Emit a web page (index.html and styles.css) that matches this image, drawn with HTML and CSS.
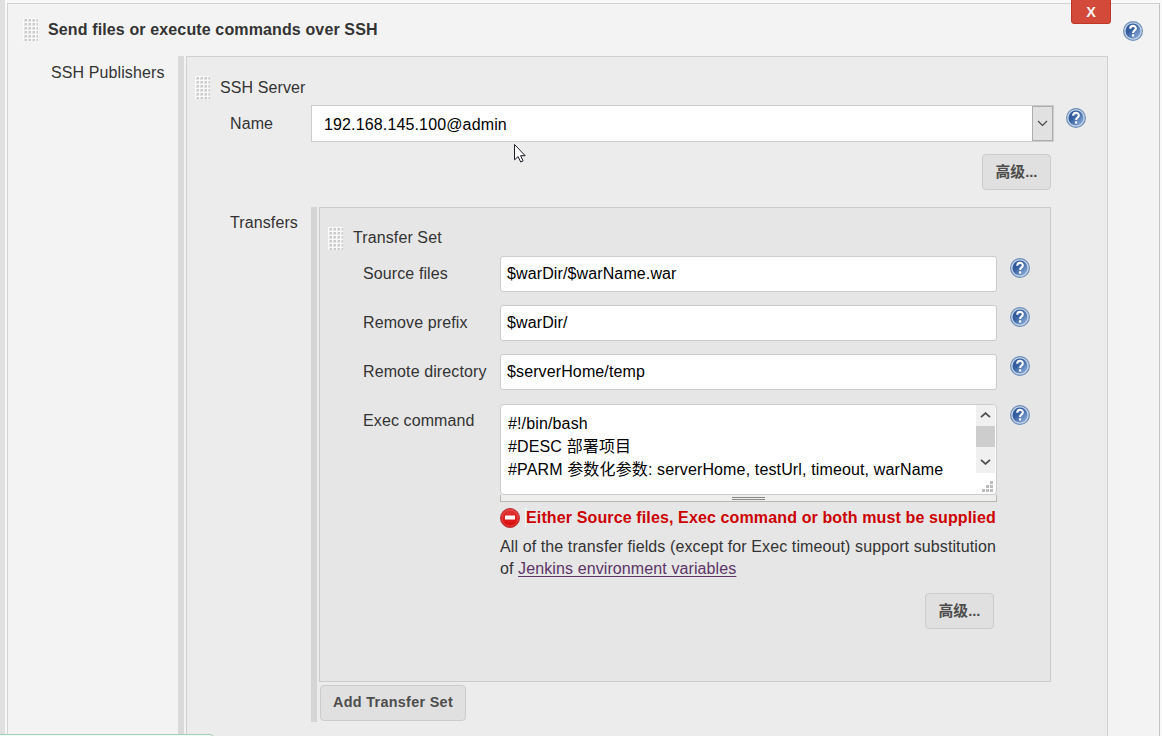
FILE: index.html
```html
<!DOCTYPE html>
<html lang="zh-CN">
<head>
<meta charset="utf-8">
<title>SSH Publishers</title>
<link rel="stylesheet" href="styles.css">
</head>
<body>
<svg width="0" height="0" class="defs">
  <defs>
    <linearGradient id="blue" x1="0" y1="0" x2="1" y2="1">
      <stop offset="0" stop-color="#285293"/><stop offset=".4" stop-color="#3660a0"/><stop offset="1" stop-color="#9dbce4"/>
    </linearGradient>
    <linearGradient id="red" x1="0" y1="0" x2="0" y2="1">
      <stop offset="0" stop-color="#e23a3a"/><stop offset="1" stop-color="#d90606"/>
    </linearGradient>
    <pattern id="dots" width="4" height="4" patternUnits="userSpaceOnUse">
      <rect width="4" height="4" fill="#fafafa"/><rect x="1" y="1" width="3" height="3" fill="#e2e2e2"/><rect x="2" y="1" width="2" height="2" fill="#cbcbcb"/>
    </pattern>
    <symbol id="grip" viewBox="0 0 15 23"><rect width="15" height="23" fill="url(#dots)"/></symbol>
    <symbol id="help" viewBox="0 0 20 20">
      <circle cx="10" cy="10" r="9.4" fill="#c3d3e8" stroke="#6f8fb8" stroke-width="1.2"/>
      <circle cx="10" cy="10" r="7.5" fill="url(#blue)"/>
      <path d="M7.2 7.8C7.2 4 13 4 12.8 7.5c0 2-2.7 2.1-2.7 4.4" fill="none" stroke="#fff" stroke-width="2.1"/>
      <rect x="9" y="13.3" width="2.2" height="2.2" fill="#fff"/>
    </symbol>
  </defs>
</svg>
<div class="page">
  <section class="panel">
    <button class="delete">X</button>
    <header class="panel-head">
      <svg class="grip"><use href="#grip"/></svg>
      <b class="title">Send files or execute commands over SSH</b>
      <svg class="help"><use href="#help"/></svg>
    </header>
    <div class="panel-body">
      <div class="side-label">SSH Publishers</div>
      <div class="bar"></div>
      <div class="server">
        <div class="server-head"><svg class="grip"><use href="#grip"/></svg><span>SSH Server</span></div>
        <div class="name-row">
          <label>Name</label>
          <div class="select"><span>192.168.145.100@admin</span>
            <div class="select-arrow"><svg width="11" height="7" viewBox="0 0 11 7"><path d="M1 1l4.5 4.5L10 1" fill="none" stroke="#444" stroke-width="1.1"/></svg></div>
          </div>
          <svg class="help"><use href="#help"/></svg>
        </div>
        <div class="advanced"><button class="btn small">高级...</button></div>
        <div class="transfers">
          <label>Transfers</label>
          <div class="transfer-list">
            <div class="set">
              <div class="set-head"><svg class="grip"><use href="#grip"/></svg><span>Transfer Set</span></div>
              <div class="field"><label>Source files</label><div class="input">$warDir/$warName.war</div><svg class="help"><use href="#help"/></svg></div>
              <div class="field"><label>Remove prefix</label><div class="input">$warDir/</div><svg class="help"><use href="#help"/></svg></div>
              <div class="field"><label>Remote directory</label><div class="input">$serverHome/temp</div><svg class="help"><use href="#help"/></svg></div>
              <div class="field exec">
                <label>Exec command</label>
                <div class="exec-main">
                  <div class="textarea">
                    <div class="code">#!/bin/bash<br>#DESC 部署项目<br>#PARM 参数化参数: serverHome, testUrl, timeout, warName</div>
                    <div class="scroll-col">
                      <div class="scrollbar">
                        <svg width="11" height="6" viewBox="0 0 11 6"><path d="M1 5.2l4.5-4.1L10 5.2" fill="none" stroke="#505050" stroke-width="1.8"/></svg>
                        <div class="thumb"></div>
                        <svg width="11" height="6" viewBox="0 0 11 6"><path d="M1 .8l4.5 4.1L10 .8" fill="none" stroke="#505050" stroke-width="1.8"/></svg>
                      </div>
                      <svg class="resizer" width="11" height="11" viewBox="0 0 11 11"><path d="M8 0h3v3H8zM4 4h3v3H4zM8 4h3v3H8zM0 8h3v3H0zM4 8h3v3H4zM8 8h3v3H8z" fill="#bdbdbd"/></svg>
                    </div>
                  </div>
                  <div class="handle"><i></i></div>
                  <div class="error">
                    <svg width="20" height="20" viewBox="0 0 20 20"><circle cx="10" cy="10" r="9.5" fill="url(#red)" stroke="#b63a3a"/><circle cx="10" cy="10" r="8" fill="none" stroke="#e65252" stroke-width=".8"/><rect x="5" y="7.5" width="10" height="4" rx=".6" fill="#fff"/></svg>
                    <b>Either Source files, Exec command or both must be supplied</b>
                  </div>
                  <p class="note">All of the transfer fields (except for Exec timeout) support substitution<br>of <a>Jenkins environment variables</a></p>
                </div>
                <svg class="help"><use href="#help"/></svg>
              </div>
              <div class="set-advanced"><button class="btn small">高级...</button></div>
            </div>
            <button class="btn add">Add Transfer Set</button>
          </div>
        </div>
      </div>
    </div>
  </section>
</div>
<svg class="cursor" width="12" height="20" viewBox="0 0 12 20"><path d="M.5 1.5v15.3l3.6-3.2 2.6 5.4 2.4-1.1-2.5-5.2h4.6z" fill="#fff" stroke="#1b1b28"/></svg>
<div class="status"></div>
</body>
</html>
```
FILE: styles.css
```css
* { box-sizing: border-box; }
body {
  margin: 0; height: 736px; overflow: hidden; background: #f9f9f9;
  color: #333; font: 16px/22px "Liberation Sans", "Noto Sans CJK SC", sans-serif;
  letter-spacing: .105px;
}
.defs { position: absolute; }
svg { display: block; flex: none; }
.page { height: 736px; border-left: 5px solid #e0e0e0; padding: 3px 2px 0; }
.panel { position: relative; height: 760px; background: #f3f3f3; border: 1px solid #d3d3d3; border-right-color: #c3c3c3; width: 1153px; }
.grip { width: 15px; height: 23px; }
.help { width: 20px; height: 20px; }
.delete {
  position: absolute; right: 48px; top: -8px; width: 40px; height: 28px; padding: 3px 0 0;
  background: #d44a3a; border: 1px solid #bd3829; border-radius: 3px;
  color: #f5f5f5; font: bold 14.5px/16px "Liberation Sans", sans-serif;
}
.panel-head { display: flex; align-items: flex-start; height: 52px; padding: 14px 16px 0 15px; }
.title { margin: 1px 0 0 10px; flex: 1; letter-spacing: .13px; }
.panel-head .help { margin-top: 3px; }
.panel-body { display: flex; height: 704px; }
.side-label { width: 170px; padding: 6px 0 0 43px; }
.bar { width: 6px; background: #dadada; margin-right: 2px; }
.server { width: 922px; background: #ececec; border: 1px solid #d0d0d0; }
.server-head { display: flex; gap: 10px; padding: 19px 0 0 8px; height: 48px; }
.server-head span { margin-top: 1px; }
.name-row { display: flex; padding-left: 43px; height: 37px; }
.name-row label { width: 81px; padding-top: 8px; }
.name-row .help { margin: 3px 0 0 12px; }
.select { display: flex; width: 743px; height: 37px; background: #fff; border: 1px solid #ccc; color: #000; }
.select span { flex: 1; padding: 8px 0 0 12px; letter-spacing: .14px; }
.select-arrow { display: flex; align-items: center; justify-content: center; width: 21px; height: 35px; background: #e1e1e1; border: 1px solid #adadad; }
.btn {
  display: block; height: 36px; padding: 0 0 1px; background: #e0e0e0; border: 1px solid #ccc; border-radius: 4px;
  color: #4d4d4d; font: bold 14.4px/20px "Liberation Sans", "Noto Sans CJK SC", sans-serif; white-space: nowrap;
}
.small { width: 69px; font-size: 14.8px; }
.advanced { display: flex; justify-content: flex-end; padding: 12px 56px 17px 0; }
.transfers { display: flex; padding-left: 43px; }
.transfers > label { width: 81px; padding-top: 5px; }
.transfer-list { border-left: 6px solid #d5d5d5; padding-left: 2px; height: 515px; }
.set { width: 732px; height: 475px; background: #e6e6e6; border: 1px solid #ccc; }
.set-head { display: flex; gap: 10px; height: 48px; padding: 19px 0 0 8px; }
.field { display: flex; padding-left: 43px; height: 49px; }
.field label { width: 137px; padding-top: 7px; }
.field .help { margin: 2px 0 0 13px; }
.input { width: 497px; height: 36px; background: #fff; border: 1px solid #ccc; border-radius: 3px; padding: 6px; color: #000; letter-spacing: .12px; }
.exec { height: auto; }
.exec-main { width: 497px; margin-top: 1px; }
.exec label { padding-top: 7px; }
.textarea { display: flex; height: 91px; background: #fff; border: 1px solid #ccc; border-radius: 4px; color: #000; }
.code { flex: 1; padding: 7px 0 0 7px; line-height: 23px; white-space: nowrap; letter-spacing: .14px; }
.scroll-col { width: 20px; }
.scrollbar { display: flex; flex-direction: column; align-items: center; width: 19px; height: 68px; background: #f0f0f0; padding-top: 7px; }
.thumb { width: 19px; height: 21px; margin: 8px 0 12px; background: #cdcdcd; }
.resizer { margin: 8px 0 0 6px; }
.handle { display: flex; justify-content: center; height: 7px; background: #eee; border: 1px solid #b9b9b0; border-top: 0; padding-top: 2px; }
.handle i { width: 33px; height: 3px; border: solid #888; border-width: 1px 0; }
.error { display: flex; align-items: center; gap: 5px; height: 22px; margin-top: 5px; color: #c00; white-space: nowrap; letter-spacing: .13px; }
.error b { border-left: 1px solid #fafafa; line-height: 20px; }
.note { margin: 7px 0 0; white-space: nowrap; }
.note a { color: #5c3566; text-decoration: underline; text-underline-offset: 2px; text-decoration-thickness: 1px; text-decoration-skip-ink: none; }
.set-advanced { display: flex; justify-content: flex-end; padding: 13px 56px 0 0; }
.add { width: 146px; margin: 3px 0 0 1px; padding-bottom: 2px; letter-spacing: .3px; }
.cursor { position: absolute; left: 514px; top: 143px; }
.status { position: absolute; left: -4px; top: 734px; width: 218px; height: 10px; border: 1px solid #9fcfb5; border-radius: 4px; background: #f4fbf7; }
```
